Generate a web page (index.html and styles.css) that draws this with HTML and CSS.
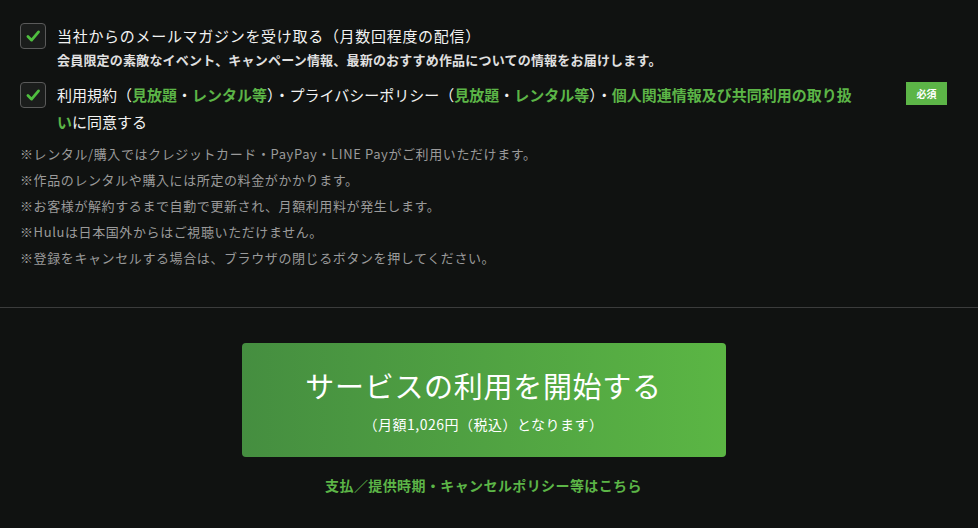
FILE: index.html
```html
<!DOCTYPE html>
<html lang="ja">
<head>
<meta charset="utf-8">
<link rel="stylesheet" href="styles.css">
</head>
<body>
<div class="page">
  <section class="agree">
    <div class="row row-mail">
      <span class="check"><svg viewBox="0 0 26 26" width="26" height="26"><path d="M7.5 13.5 L11.5 17.5 L19 8.5" fill="none" stroke="#4fbf3f" stroke-width="3" stroke-linecap="round" stroke-linejoin="round"/></svg></span>
      <div class="label">
        <p class="main">当社からのメールマガジンを受け取る（月数回程度の配信）</p>
        <p class="sub">会員限定の素敵なイベント、キャンペーン情報、最新のおすすめ作品についての情報をお届けします。</p>
      </div>
    </div>
    <div class="row row-terms">
      <span class="check"><svg viewBox="0 0 26 26" width="26" height="26"><path d="M7.5 13.5 L11.5 17.5 L19 8.5" fill="none" stroke="#4fbf3f" stroke-width="3" stroke-linecap="round" stroke-linejoin="round"/></svg></span>
      <p class="label terms">利用規約（<a class="lnk">見放題</a>・<a class="lnk">レンタル等</a>）・プライバシーポリシー（<a class="lnk">見放題</a>・<a class="lnk">レンタル等</a>）・<a class="lnk">個人関連情報及び共同利用の取り扱</a><a class="lnk">い</a>に同意する</p>
      <span class="badge">必須</span>
    </div>
    <ul class="notes">
      <li>※レンタル/購入ではクレジットカード・PayPay・LINE Payがご利用いただけます。</li>
      <li>※作品のレンタルや購入には所定の料金がかかります。</li>
      <li>※お客様が解約するまで自動で更新され、月額利用料が発生します。</li>
      <li>※Huluは日本国外からはご視聴いただけません。</li>
      <li>※登録をキャンセルする場合は、ブラウザの閉じるボタンを押してください。</li>
    </ul>
  </section>
  <hr class="sep">
  <section class="action">
    <button class="start">
      <span class="start-title">サービスの利用を開始する</span>
      <span class="start-sub">（月額1,026円（税込）となります）</span>
    </button>
    <a class="policy">支払／提供時期・キャンセルポリシー等はこちら</a>
  </section>
</div>
</body>
</html>
```

FILE: styles.css
```css
html, body {
  margin: 0;
  padding: 0;
  background: #101211;
}
body {
  font-family: "Noto Sans CJK JP", "Noto Sans", sans-serif;
  color: #ececec;
  width: 978px;
  height: 528px;
  overflow: hidden;
}
p { margin: 0; }
.page {
  display: flex;
  flex-direction: column;
}
.agree {
  padding: 23px 31px 0 20px;
}
.row {
  display: flex;
  align-items: flex-start;
}
.check {
  flex: none;
  width: 24px;
  height: 24px;
  border: 1px solid #5a5a5a;
  border-radius: 4px;
  background: #1b1d1c;
  display: flex;
  align-items: center;
  justify-content: center;
}
.check svg { display: block; }
.label {
  margin-left: 11px;
}
.main {
  font-size: 15px;
  line-height: 26px;
  font-weight: 400;
  color: #f2f2f2;
  letter-spacing: 0.7px;
}
.sub {
  font-size: 13px;
  line-height: 22px;
  font-weight: 700;
  color: #e0e0e0;
  letter-spacing: 0.2px;
}
.row-terms {
  margin-top: 11px;
}
.terms {
  flex: 1;
  font-size: 15px;
  line-height: 27px;
  font-weight: 400;
  color: #f2f2f2;
  margin-right: 48px;
  margin-top: -1px;
}
.lnk {
  color: #5cb547;
  font-weight: 700;
}
.badge {
  flex: none;
  width: 41px;
  height: 23px;
  background: #5cb547;
  color: #fff;
  font-size: 10px;
  font-weight: 700;
  line-height: 23px;
  text-align: center;
}
.notes {
  list-style: none;
  margin: 6px 0 0;
  padding: 0;
  font-size: 13px;
  line-height: 26px;
  color: #9a9a9a;
  letter-spacing: 0.6px;
}
.sep {
  margin: 36px 0 0;
  border: 0;
  height: 1px;
  background: #3b3c3c;
}
.action {
  display: flex;
  flex-direction: column;
  align-items: center;
  padding: 35px 31px 0 20px;
}
.start {
  width: 484px;
  height: 114px;
  border: 0;
  border-radius: 4px;
  background: linear-gradient(90deg, #458e40 0%, #5bb644 100%);
  color: #fff;
  font-family: inherit;
  display: flex;
  flex-direction: column;
  align-items: center;
  justify-content: flex-start;
  padding: 22px 0 0;
}
.start-title {
  font-size: 29px;
  line-height: 40px;
  font-weight: 400;
  letter-spacing: 0.7px;
}
.start-sub {
  font-size: 14px;
  line-height: 22px;
  margin-top: 8px;
  font-weight: 400;
  letter-spacing: 0.5px;
}
.policy {
  margin-top: 18px;
  color: #5cb547;
  font-size: 14px;
  line-height: 20px;
  font-weight: 700;
  letter-spacing: 0.4px;
}
```
